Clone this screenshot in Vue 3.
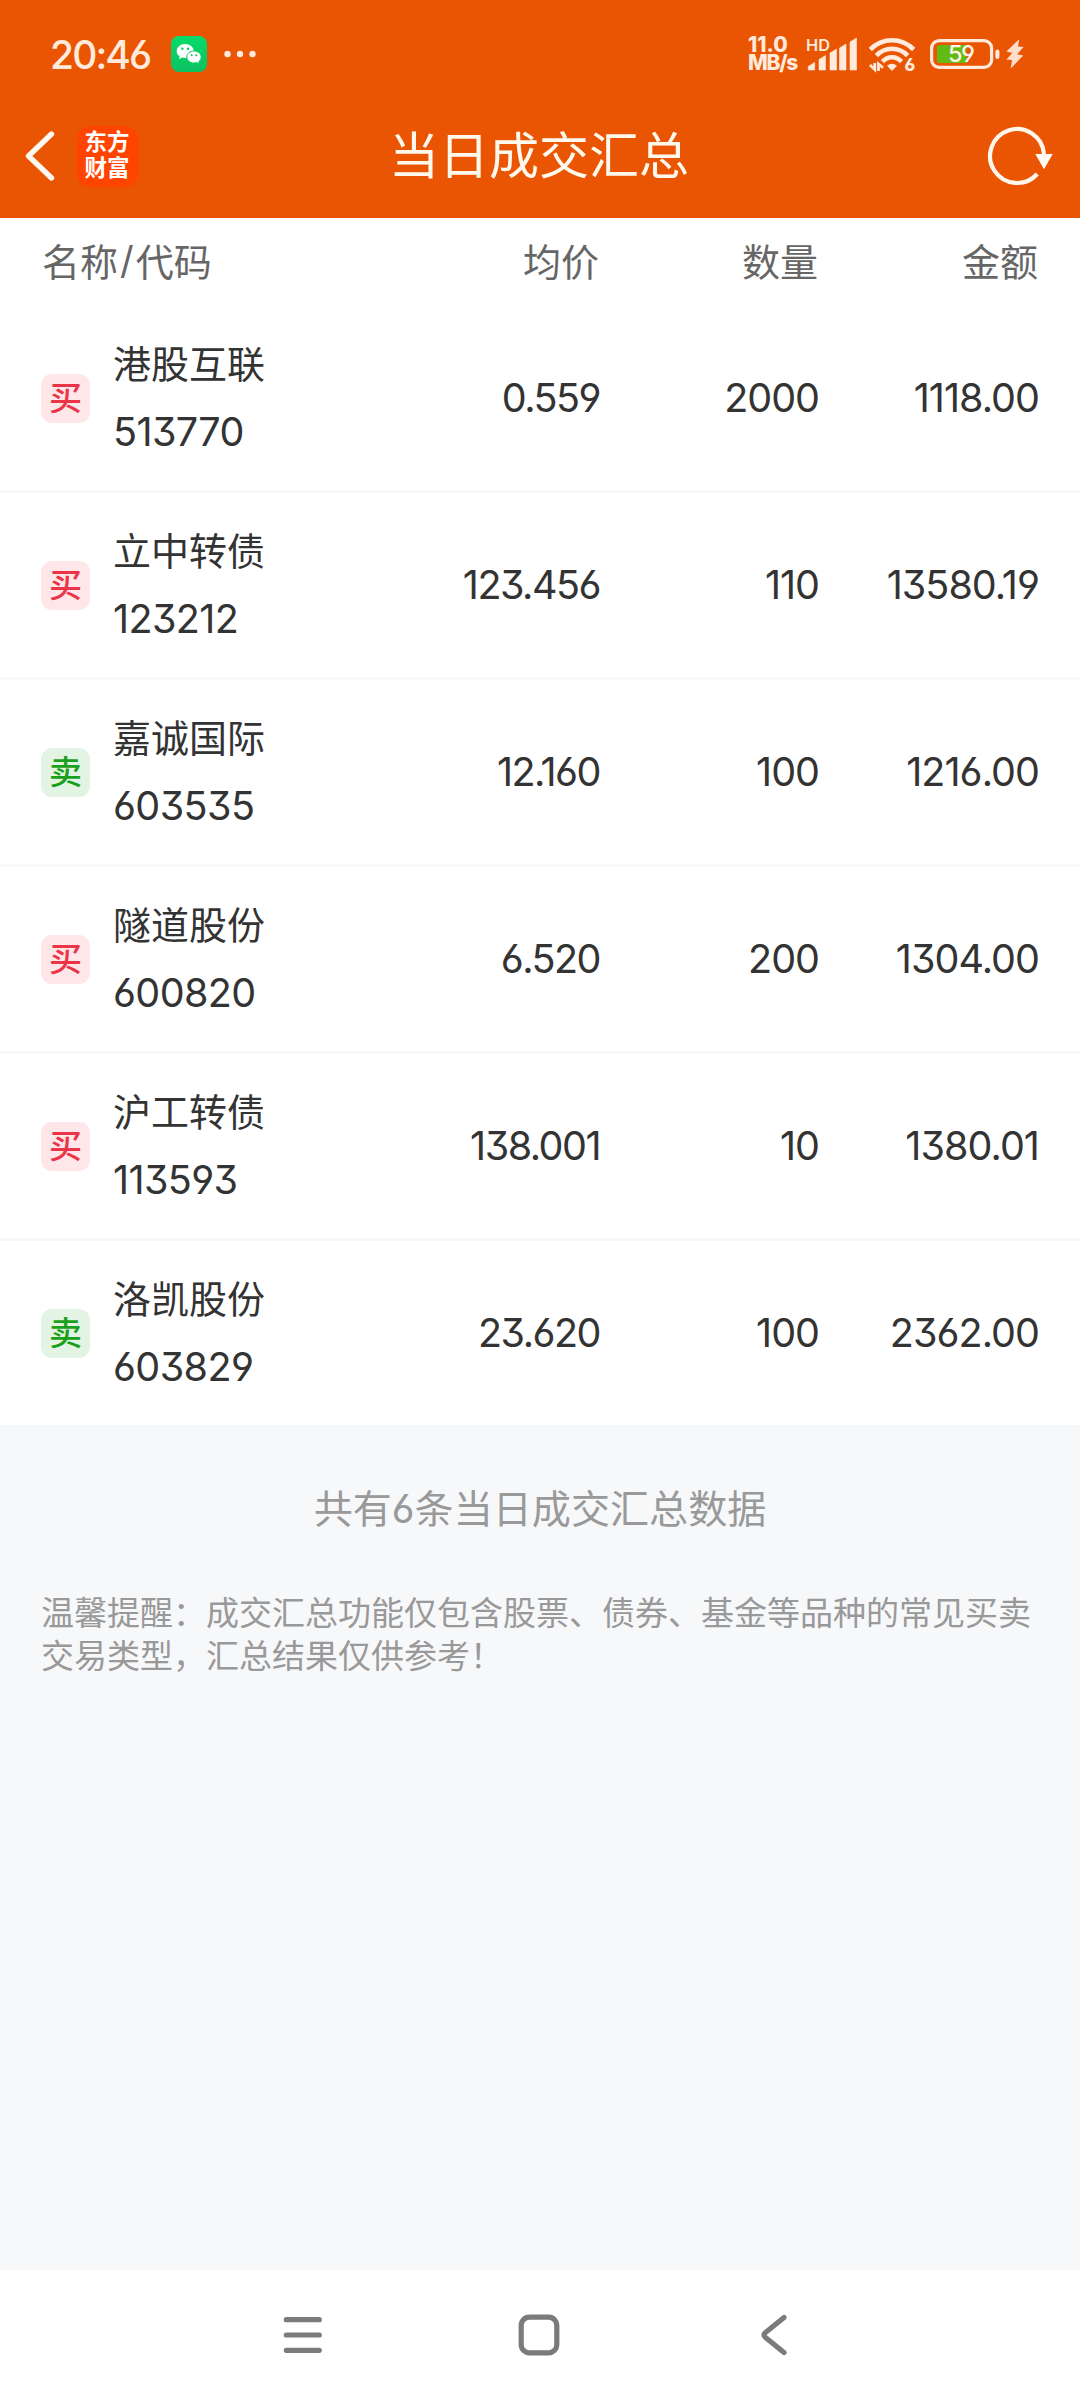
<script setup>
const trades = [
  { side: 'buy', name: '港股互联', code: '513770', price: '0.559', qty: '2000', amount: '1118.00' },
  { side: 'buy', name: '立中转债', code: '123212', price: '123.456', qty: '110', amount: '13580.19' },
  { side: 'sell', name: '嘉诚国际', code: '603535', price: '12.160', qty: '100', amount: '1216.00' },
  { side: 'buy', name: '隧道股份', code: '600820', price: '6.520', qty: '200', amount: '1304.00' },
  { side: 'buy', name: '沪工转债', code: '113593', price: '138.001', qty: '10', amount: '1380.01' },
  { side: 'sell', name: '洛凯股份', code: '603829', price: '23.620', qty: '100', amount: '2362.00' },
]
</script>

<template>
  <div class="screen">
    <header class="top">
      <div class="status">
        <span class="clock">20:46</span>
        <svg class="wechat" width="36" height="36" viewBox="0 0 36 36">
          <defs>
            <linearGradient id="wx" x1="0" y1="0" x2="0" y2="1">
              <stop offset="0" stop-color="#06dc6b" />
              <stop offset="1" stop-color="#0cc160" />
            </linearGradient>
          </defs>
          <rect width="36" height="36" rx="8" fill="url(#wx)" />
          <path d="M14.2 8C9.400 8 5.700 11.200 5.700 15.100c0 2.300 1.200 4.200 3.100 5.500l-.9 2.600 3.200-1.600c1 .3 2 .5 3.100.5 4.800 0 8.600-3.100 8.600-7S19 8 14.200 8z" fill="#fff" />
          <path d="M23 15c-4.100 0-7.200 2.700-7.200 6s3.100 6 7.200 6c.9 0 1.800-.1 2.600-.4l2.800 1.500-.7-2.400c1.500-1.100 2.500-2.800 2.500-4.700 0-3.300-3.200-6-7.200-6z" fill="#fff" stroke="#0aca65" stroke-width="1" />
          <g fill="#0aca65">
            <circle cx="11.400" cy="12.800" r="1.200" /><circle cx="17" cy="12.800" r="1.200" />
            <circle cx="20.700" cy="19.300" r="1" /><circle cx="25.300" cy="19.300" r="1" />
          </g>
        </svg>
        <svg class="dots" width="32" height="8" viewBox="0 0 32 8" fill="#ffeadb">
          <circle cx="3.500" cy="4" r="3.200" /><circle cx="16" cy="4" r="3.200" /><circle cx="28.500" cy="4" r="3.200" />
        </svg>
        <div class="speed"><span class="rate">11.0</span><span>MB/s</span></div>
        <svg class="signal" width="52" height="36" viewBox="0 0 52 36" fill="#ffeadb">
          <text x="0" y="14.500" font-size="16" font-weight="600" textLength="24" lengthAdjust="spacingAndGlyphs">HD</text>
          <path d="M2.300 34v-3.600l6.400-4V34zM13 34V23.500l6.500-4V34zM24 34V17l6.500-4V34zM33.500 34V12l6.500-4V34zM44 34V6l6.500-4v32z" stroke="#ffeadb" stroke-width=".6" stroke-linejoin="round" />
        </svg>
        <svg class="wifi" width="48" height="36" viewBox="0 0 48 36">
          <g fill="none" stroke="#ffeadb" stroke-width="4.600">
            <path d="M2.300 13.500Q11.500 4.300 24 4.300T45.700 13.500" />
            <path d="M8.400 19.600Q14.800 12.800 24 12.800T39.600 19.600" />
            <path d="M14.500 25.600Q18.500 21.200 24 21.200T33.500 25.600" />
          </g>
          <path d="M24 35l-5-5.200q5-4.200 10 0z" fill="#ffeadb" />
          <path d="M2 29l4.800 4.500V27M10.500 35v-7l4.500 3.800" fill="none" stroke="#ffeadb" stroke-width="2.800" />
          <text x="36.500" y="34.500" font-size="17" font-weight="800" fill="#ffeadb">6</text>
        </svg>
        <svg class="battery" width="70" height="30" viewBox="0 0 70 30">
          <rect x="1.600" y="1.600" width="60" height="26.800" rx="7.500" fill="none" stroke="#ffeadb" stroke-width="3.200" />
          <path d="M10 6h26.500v18H10a3 3 0 0 1-3-3V9a3 3 0 0 1 3-3z" fill="#62bb12" />
          <rect x="65.400" y="10.500" width="4" height="9.500" rx="2" fill="#ffeadb" />
          <text x="31.400" y="23.400" font-size="23.500" font-weight="500" fill="#fff3ea" text-anchor="middle" textLength="27">59</text>
        </svg>
        <svg class="bolt" width="18" height="30" viewBox="0 0 18 30">
          <path d="M13.200.2L.4 12.400l6 1.700-6 6.400 5.600.5-1.300 8.600L17.300 16.500l-6.200-1.200 6.500-7.400-5.600-.4z" fill="#ffdfcb" />
        </svg>
      </div>
      <div class="titlebar">
        <div class="side">
          <svg class="back" width="30" height="50" viewBox="0 0 30 50">
            <path d="M26.500 3L3.500 25l23 22" fill="none" stroke="#fff8f0" stroke-width="5.400" stroke-linecap="round" stroke-linejoin="round" />
          </svg>
          <div class="logo"><span>东方</span><span>财富</span></div>
        </div>
        <h1>当日成交汇总</h1>
        <div class="side end">
          <svg width="66" height="60" viewBox="0 0 66 60">
            <path d="M57 28A27 27 0 1 0 50.200 48" fill="none" stroke="#fff6ec" stroke-width="4.200" />
            <path d="M48.300 28h17.400L57 43.200z" fill="#fffaf4" />
          </svg>
        </div>
      </div>
    </header>

    <section class="table">
      <div class="row head">
        <span class="who">名称<i>/</i>代码</span>
        <span class="price">均价</span>
        <span class="qty">数量</span>
        <span class="amount">金额</span>
      </div>
      <div v-for="t in trades" :key="t.code" class="row trade">
        <div class="who">
          <span class="badge" :class="t.side">{{ t.side === 'buy' ? '买' : '卖' }}</span>
          <div class="label">
            <span class="name">{{ t.name }}</span>
            <span class="num">{{ t.code }}</span>
          </div>
        </div>
        <span class="price num">{{ t.price }}</span>
        <span class="qty num">{{ t.qty }}</span>
        <span class="amount num">{{ t.amount }}</span>
      </div>
    </section>

    <main class="foot">
      <p class="count">共有6条当日成交汇总数据</p>
      <p class="tip">温馨提醒：成交汇总功能仅包含股票、债券、基金等品种的常见买卖交易类型，汇总结果仅供参考！</p>
    </main>

    <nav class="nav">
      <svg width="44" height="44" viewBox="0 0 44 44"><path d="M5.300 6.700h33M5.300 22h33M5.300 37.300h33" /></svg>
      <svg width="44" height="44" viewBox="0 0 44 44"><rect x="4.200" y="4.200" width="35.600" height="35.600" rx="8" /></svg>
      <svg width="44" height="44" viewBox="0 0 44 44"><path d="M31 4.500L12.500 19.500Q9.500 22 12.500 24.500L31 39.500" /></svg>
    </nav>
  </div>
</template>

<style>
body {
  background: #f7f8fa;
}
</style>

<style scoped>
.screen {
  width: 1080px;
  height: 2400px;
  display: flex;
  flex-direction: column;
  overflow: hidden;
  background: #f7f8fa;
  font-family: Inter, "Noto Sans CJK SC", sans-serif;
  font-feature-settings: "cv03", "cv04", "cv09";
}
.top {
  height: 218px;
  background: #ea5504;
  color: #ffeadb;
}
.status {
  height: 94px;
  padding: 14px 56px 0 50px;
  box-sizing: border-box;
  display: flex;
  align-items: center;
}
.status svg {
  overflow: visible;
}
.clock {
  width: 121px;
  font-size: 39px;
  font-weight: 500;
  letter-spacing: -1.9px;
}
.dots {
  margin-left: 17px;
}
.speed {
  margin-left: auto;
  width: 58px;
  display: flex;
  flex-direction: column;
  font-size: 21px;
  font-weight: 800;
  line-height: 18px;
  letter-spacing: -1.300px;
}
.rate {
  letter-spacing: 0;
}
.signal {
  margin-right: 10px;
}
.wifi {
  margin-right: 14px;
}
.battery {
  margin-right: 6px;
}
.titlebar {
  height: 124px;
  padding: 0 27px 0 25px;
  display: flex;
  align-items: center;
}
.side {
  flex: 1;
  display: flex;
  align-items: center;
}
.end {
  justify-content: flex-end;
}
.logo {
  width: 61px;
  height: 61px;
  margin-left: 22px;
  padding: 0 1px 6px 0;
  box-sizing: border-box;
  border-radius: 13px;
  background: #ff4400;
  color: #fff;
  display: flex;
  flex-direction: column;
  align-items: center;
  justify-content: center;
  font-family: "Noto Sans CJK SC", sans-serif;
  font-size: 22.500px;
  font-weight: 700;
  line-height: 26.500px;
}
h1 {
  margin: 0;
  font-size: 50px;
  font-weight: 400;
  color: #fff8ec;
  line-height: 70px;
}
.table {
  background: #fff;
}
.row {
  padding: 0 41px;
  display: flex;
  align-items: center;
  color: #333;
}
.head {
  height: 88px;
  padding: 0 42px 5px 42px;
  box-sizing: border-box;
  font-size: 38px;
  color: #666;
}
.head i {
  font-style: normal;
  margin: 0 2px;
}
.trade {
  height: 184px;
  border-bottom: 3px solid #f7f8f9;
}
.who {
  flex: 1;
  display: flex;
  align-items: center;
}
.badge {
  width: 49px;
  height: 49px;
  border-radius: 11px;
  text-align: center;
  font-size: 33px;
  line-height: 48px;
  font-weight: 500;
}
.buy {
  background: #fee6e9;
  color: #ea3447;
}
.sell {
  background: #e3f4e4;
  color: #1ba01b;
}
.label {
  margin-left: 23px;
  display: flex;
  flex-direction: column;
}
.name {
  font-size: 38px;
  line-height: 68px;
}
.num {
  font-size: 39.500px;
  font-weight: 385;
  line-height: 68px;
  letter-spacing: -0.600px;
}
.price,
.qty,
.amount {
  text-align: right;
}
.qty.num {
  letter-spacing: -1px;
}
.price.num {
  letter-spacing: -1.500px;
}
.amount.num {
  letter-spacing: -0.950px;
}
.price {
  width: 220px;
}
.qty {
  width: 219px;
}
.amount {
  width: 220px;
}
.foot {
  flex: 1;
  padding: 0 41px;
  color: #999;
}
.count {
  margin: 51px 0 0;
  font-size: 39.100px;
  line-height: 60px;
  text-align: center;
}
.tip {
  margin: 53px 0 0;
  font-size: 33px;
  line-height: 43px;
}
.nav {
  height: 130px;
  background: #fff;
  display: flex;
  justify-content: center;
  gap: 192px;
  padding-right: 2px;
}
.nav svg {
  margin-top: 43px;
  fill: none;
  stroke: #7b7b7b;
  stroke-width: 5.200;
  stroke-linecap: round;
}
</style>
